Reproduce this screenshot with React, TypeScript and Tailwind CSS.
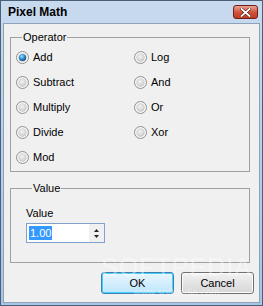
import { useState } from "react";

const font = { fontFamily: '"Liberation Sans", Arial, sans-serif' };

function Radio({ checked }: { checked: boolean }) {
  return (
    <svg width="13" height="13" viewBox="0 0 13 13" className="shrink-0">
      <defs>
        <radialGradient id="rg" cx="0.45" cy="0.4" r="0.7">
          <stop offset="0" stopColor="#f4f4f4" />
          <stop offset="1" stopColor="#c0c0c0" />
        </radialGradient>
        <radialGradient id="rb" cx="0.4" cy="0.35" r="0.7">
          <stop offset="0" stopColor="#9fe0ff" />
          <stop offset="0.6" stopColor="#1f86c9" />
          <stop offset="1" stopColor="#0b3d70" />
        </radialGradient>
      </defs>
      <circle cx="6.5" cy="6.5" r="6" fill="#f6f6f6" stroke="#8e8f8f" strokeWidth="1" />
      <circle cx="6.5" cy="6.5" r="4.2" fill="url(#rg)" />
      {checked && <circle cx="6.5" cy="6.5" r="3.6" fill="url(#rb)" />}
    </svg>
  );
}

function Option({ label, checked, onPick }: { label: string; checked: boolean; onPick: () => void }) {
  return (
    <label className="flex h-[25px] cursor-default items-center gap-[4px]" onClick={onPick}>
      <Radio checked={checked} />
      <span className="text-[11px] leading-none text-black">{label}</span>
    </label>
  );
}

export default function App() {
  const [op, setOp] = useState("Add");
  const left = ["Add", "Subtract", "Multiply", "Divide", "Mod"];
  const right = ["Log", "And", "Or", "Xor"];

  return (
    <div
      className="relative flex h-[306px] w-[263px] flex-col overflow-hidden border border-[#4a5f78] bg-gradient-to-b from-[#c8daee] to-[#a9c5e4]"
      style={font}
    >
      {/* title bar */}
      <div className="flex h-[22px] shrink-0 items-center justify-between pl-[7px] pr-[4px]">
        <span className="text-[12px] font-bold text-black">Pixel Math</span>
        <div className="flex h-[14px] w-[25px] items-center justify-center rounded-[3px] border border-[#6e2119] bg-gradient-to-b from-[#e9a393] via-[#d2553f] to-[#c23a22]">
          <svg width="11" height="9" viewBox="0 0 11 9">
            <path d="M1.5 1 L9.5 8 M9.5 1 L1.5 8" stroke="#5a1a12" strokeWidth="3" strokeLinecap="square" />
            <path d="M1.5 1 L9.5 8 M9.5 1 L1.5 8" stroke="#ffffff" strokeWidth="1.8" strokeLinecap="square" />
          </svg>
        </div>
      </div>

      {/* client area */}
      <div className="mx-[2px] mb-[2px] flex flex-1 flex-col border border-[#8ba2bb] bg-[#f0f0f0] px-[6px]">
        <fieldset className="mt-[7px] h-[141px] w-[240px] border border-[#a0a0a0] pl-[5px]">
          <legend className="ml-[6px] px-[1px] text-[11px] leading-[13px] text-black">Operator</legend>
          <div className="grid grid-cols-[118px_1fr] pt-[1px]">
            <div className="flex flex-col">
              {left.map((l) => (
                <Option key={l} label={l} checked={op === l} onPick={() => setOp(l)} />
              ))}
            </div>
            <div className="flex flex-col">
              {right.map((l) => (
                <Option key={l} label={l} checked={op === l} onPick={() => setOp(l)} />
              ))}
            </div>
          </div>
        </fieldset>

        <fieldset className="mt-[10px] h-[81px] w-[240px] border border-[#a0a0a0] pl-[15px]">
          <legend className="ml-[6px] px-[1px] text-[11px] leading-[13px] text-black">Value</legend>
          <div className="mt-[12px] text-[11px] leading-[13px] text-black">Value</div>
          <div className="mt-[3px] flex h-[20px] w-[79px] items-center border border-[#7da2ce] bg-white pl-[2px]">
            <span className="bg-[#3399ff] px-[1px] text-[11px] leading-[14px] text-white">1.00</span>
            <div className="ml-auto flex h-full w-[15px] flex-col items-center justify-center gap-[3px] bg-[#f0f0f0]">
              <svg width="5" height="3" viewBox="0 0 5 3">
                <path d="M2.5 0 L5 3 L0 3 Z" fill="#222" />
              </svg>
              <svg width="5" height="3" viewBox="0 0 5 3">
                <path d="M0 0 L5 0 L2.5 3 Z" fill="#222" />
              </svg>
            </div>
          </div>
        </fieldset>

        <div className="mt-[9px] flex justify-end gap-[7px]">
          <button className="h-[22px] w-[73px] rounded-[3px] border border-[#3c7fb1] bg-gradient-to-b from-[#eaf6fd] to-[#bee6fd] text-[11px] text-black shadow-[inset_0_0_0_1px_#48d0f8]">
            OK
          </button>
          <button className="mr-[-1px] h-[22px] w-[73px] rounded-[3px] border border-[#707070] bg-gradient-to-b from-[#f2f2f2] to-[#d6d6d6] text-[11px] text-black shadow-[inset_0_0_0_1px_#fcfcfc]">
            Cancel
          </button>
        </div>
      </div>

      {/* watermark */}
      <div className="pointer-events-none absolute left-[108px] top-[254px] flex w-[135px] flex-col items-center">
        <span className="text-[25px] leading-none tracking-[1px] text-white/40">SOFTPEDIA</span>
        <span className="mt-[8px] text-[10px] leading-none text-white/40">www.softpedia.com</span>
      </div>
    </div>
  );
}
